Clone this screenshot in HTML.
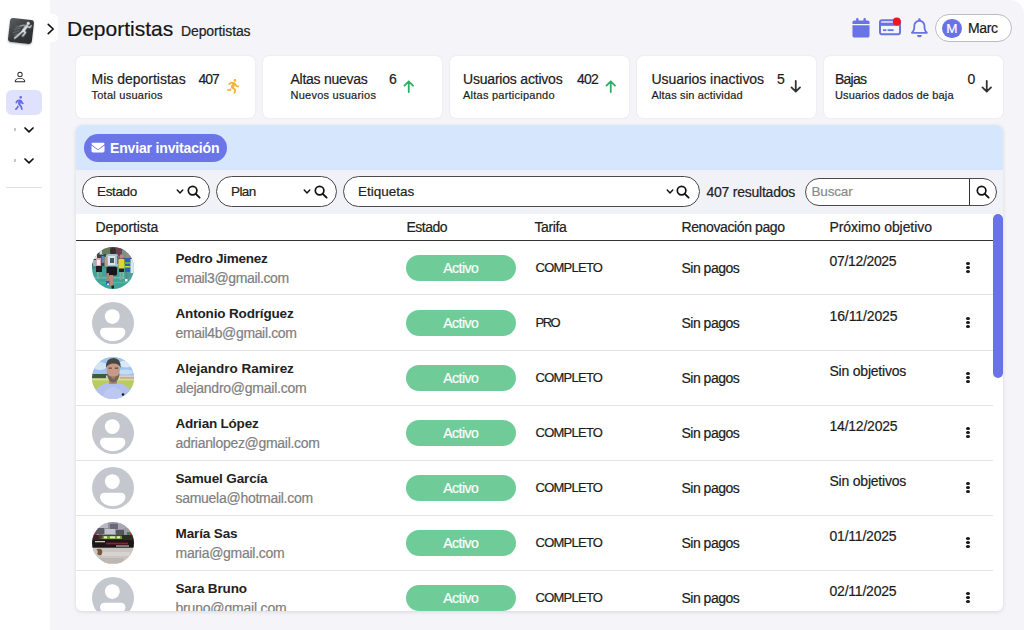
<!DOCTYPE html>
<html lang="es">
<head>
<meta charset="utf-8">
<title>Deportistas</title>
<style>
*{box-sizing:border-box;margin:0;padding:0}
html,body{width:1024px;height:630px;overflow:hidden;background:#fff}
body{font-family:"Liberation Sans",sans-serif;color:#1f1f1f;position:relative;-webkit-text-stroke:.2px currentColor}
svg{display:block;position:absolute;overflow:visible}
#app{position:absolute;left:0;top:0;width:1024px;height:630px;background:#f4f4f9;border-top-right-radius:14px;overflow:hidden}
#side{position:absolute;left:0;top:0;width:50px;height:630px;background:#fff}
#bump{position:absolute;left:40px;top:14px;width:18px;height:28px;background:#fff;border-radius:0 5px 5px 0}
#logo{position:absolute;left:9.1px;top:18.8px;width:23.5px;height:23.5px;border-radius:3px;background:linear-gradient(135deg,#5c6063,#34373a 55%,#2a2d2f);transform:rotate(6.5deg);box-shadow:0 1px 2px rgba(0,0,0,.3)}
.nav-active{position:absolute;left:6px;top:89.5px;width:35.5px;height:25.5px;border-radius:6px;background:#e0e1fd}
.divider{position:absolute;left:6px;top:187px;width:35.5px;height:1px;background:#e0e0e6}
h1{position:absolute;left:67px;top:16px;font-size:21px;font-weight:400;line-height:26px;color:#141414;white-space:nowrap}
.sub{position:absolute;left:181px;top:22px;font-size:14px;letter-spacing:-.12px;line-height:18px;color:#222;white-space:nowrap}
.pill{position:absolute;left:934.5px;top:14px;width:77.5px;height:28px;border:1px solid #bcbcc4;border-radius:14px;background:#fff}
.pill .av{position:absolute;left:6.5px;top:3.5px;width:19.5px;height:19.5px;border-radius:50%;background:#6873e6;color:#fff;font-size:13.5px;line-height:19.5px;text-align:center}
.pill .nm{position:absolute;left:32.5px;top:4px;font-size:14px;line-height:18px;color:#1a1a1a}
.card{position:absolute;top:56px;width:178.6px;height:61.5px;background:#fff;border-radius:6px;box-shadow:0 0 2px rgba(0,0,0,.10)}
.card .t,.card .n{position:absolute;top:15px;font-size:14px;line-height:16px;white-space:nowrap;color:#1c1c1c}
.card .s{position:absolute;top:33px;font-size:11px;letter-spacing:.25px;line-height:13px;white-space:nowrap;color:#1c1c1c}
#panel{position:absolute;left:75.5px;top:125px;width:927.5px;height:486px;background:#fff;border-radius:6px;overflow:hidden;box-shadow:0 1px 4px rgba(0,0,0,.12)}
#band{position:absolute;left:0;top:0;width:928px;height:45px;background:#d5e6fd}
#btn{-webkit-text-stroke:0;position:absolute;left:8.5px;top:9px;width:143px;height:28px;border-radius:14px;background:#6a75e8;color:#fff;font-weight:700;font-size:14px;line-height:28px;padding-left:26px;white-space:nowrap}
#filters{position:absolute;left:0;top:45px;width:928px;height:44px;background:#f1f1f8}
.sel{position:absolute;top:6px;height:31px;border:1px solid #4a4a4a;border-radius:15.5px;background:#fff;font-size:13.5px;line-height:29px;padding-left:14px;color:#222;white-space:nowrap}
.res{position:absolute;left:631px;top:14px;font-size:14px;line-height:16px;color:#222;white-space:nowrap}
#thead{position:absolute;left:0;top:89px;width:917px;height:27px;border-bottom:1px solid #333;font-size:14px;color:#222}
#thead>span{position:absolute;top:5px;line-height:16px;white-space:nowrap}
.row{position:absolute;left:0;width:917px;height:55px;border-bottom:1px solid #e4e4e8;font-size:14px;color:#1c1c1c}
.row .nm{-webkit-text-stroke:0;position:absolute;left:100px;top:9.5px;font-weight:700;font-size:13.5px;line-height:16px;white-space:nowrap;color:#222}
.row .em{position:absolute;left:100px;top:28.5px;font-size:14px;line-height:16px;white-space:nowrap;color:#808080}
.row .st{position:absolute;left:330.5px;top:14px;width:109.5px;height:26px;border-radius:13px;background:#6fcc99;color:#fff;text-align:center;line-height:26px;font-size:14px}
.row .tf{position:absolute;left:460px;top:19px;font-size:13px;line-height:16px;white-space:nowrap}
.row .rn{position:absolute;left:606px;top:19px;line-height:16px;white-space:nowrap}
.row .ob{position:absolute;left:754px;top:12px;line-height:16px;white-space:nowrap}
.row .dots{position:absolute;left:890.8px;top:21px;width:4px;height:12px}
.row .dots i{display:block;width:3.9px;height:3.3px;border-radius:50%;background:#1a1a1a;margin-bottom:.65px}
.ava{left:16px;top:6px;width:42px;height:42px}
#scroll{position:absolute;left:917.5px;top:89px;width:10px;height:164px;border-radius:5px;background:#6873e6}
</style>
</head>
<body>
<div id="app">
<div id="side">
<div id="logo"><svg viewBox="0 0 25 25" style="left:0;top:0;width:23.5px;height:23.5px;filter:blur(.3px)"><g fill="none" stroke="#dde1e4" stroke-linecap="round" stroke-linejoin="round"><circle cx="19.500" cy="3.700" r="1.700" fill="#e6e9eb" stroke="none"/><path d="M18.400 6.800 L15 12.300" stroke-width="3"/><path d="M18.800 6.600 L21.600 8.200 L23 5.800" stroke-width="1.400"/><path d="M18 6.600 L14.400 6.400 L11.400 7.600" stroke="#aeb3b6" stroke-width="1.300"/><path d="M15.200 12.300 L17.700 13.600 L15.200 17.800" stroke-width="1.700"/><path d="M14.600 12.600 L11 16.800 L7 21" stroke-width="1.800"/><path d="M5.500 12 L12 9.500 M5 15.500 L11.500 12.300 M7 9 L12 7.600 M6 18.300 L10 15.600" stroke="#7d8386" stroke-width=".9"/></g></svg></div>
<svg viewBox="0 0 16 16" style="left:12.5px;top:69.5px;width:14px;height:14px"><path fill="#222" d="M8 8a3 3 0 1 0 0-6 3 3 0 0 0 0 6m2-3a2 2 0 1 1-4 0 2 2 0 0 1 4 0m4 8c0 1-1 1-1 1H3s-1 0-1-1 1-4 6-4 6 3 6 4m-1-.004c-.001-.246-.154-.986-.832-1.664C11.516 10.68 10.289 10 8 10s-3.516.68-4.168 1.332c-.678.678-.83 1.418-.832 1.664z"/></svg>
<div class="nav-active"></div>
<svg viewBox="0 0 320 512" style="left:15px;top:95.5px;width:8.8px;height:14px"><path fill="#6769ef" d="M160 48a48 48 0 1 1 96 0 48 48 0 1 1 -96 0zM126.500 199.300c-1 .4-1.900 .8-2.900 1.200l-8 3.500c-16.400 7.300-29 21.200-34.700 38.200l-2.600 7.800c-5.600 16.800-23.700 25.800-40.500 20.200s-25.800-23.700-20.200-40.500l2.600-7.800c11.400-34.100 36.600-61.900 69.400-76.500l8-3.500c20.800-9.200 43.300-14 66.100-14c44.600 0 84.800 26.800 101.900 67.900L281 232.700l21.400 10.700c15.800 7.900 22.200 27.100 14.300 42.900s-27.100 22.200-42.900 14.300L247 287.300c-10.300-5.200-18.400-13.800-22.800-24.500l-9.600-23-19.300 65.500 49.500 54c5.400 5.900 9.200 13 11.200 20.800l23 92.100c4.300 17.100-6.100 34.500-23.300 38.800s-34.500-6.100-38.800-23.300l-22-88.100-70.700-77.100c-14.800-16.100-20.300-38.600-14.700-59.700l16.900-63.500zM68.700 398l25-62.400c2.100 3 4.500 5.800 7 8.600l40.700 44.400-14.500 36.200c-2.400 6-6 11.500-10.600 16.100L54.600 502.600c-12.500 12.500-32.800 12.500-45.300 0s-12.500-32.800 0-45.300L68.700 398z"/></svg>
<svg viewBox="0 0 10 6" style="left:23.8px;top:127px;width:10px;height:6px"><path d="M1 1 L5 4.8 L9 1" fill="none" stroke="#111" stroke-width="1.7" stroke-linecap="round" stroke-linejoin="round"/></svg>
<svg viewBox="0 0 10 6" style="left:23.8px;top:157.8px;width:10px;height:6px"><path d="M1 1 L5 4.8 L9 1" fill="none" stroke="#111" stroke-width="1.7" stroke-linecap="round" stroke-linejoin="round"/></svg>
<div style="position:absolute;left:14px;top:128px;width:2px;height:3px;background:#c4c4cc"></div>
<div style="position:absolute;left:14px;top:159px;width:2px;height:3px;background:#c4c4cc"></div>
<div class="divider"></div>
</div>
<div id="bump"></div>
<svg viewBox="0 0 8 12" style="left:46.5px;top:22.5px;width:7.5px;height:12px"><path d="M1.3 1 L6.6 6 L1.3 11" fill="none" stroke="#111" stroke-width="1.7" stroke-linecap="round" stroke-linejoin="round"/></svg>
<h1>Deportistas</h1>
<div class="sub">Deportistas</div>
<svg viewBox="0 0 448 512" style="left:851.5px;top:17.5px;width:18px;height:19.5px"><path fill="#6873e6" d="M96 32V64H48C21.500 64 0 85.500 0 112v48H448V112c0-26.500-21.500-48-48-48H352V32c0-17.700-14.300-32-32-32s-32 14.300-32 32V64H160V32c0-17.700-14.300-32-32-32S96 14.300 96 32zM448 192H0V464c0 26.500 21.500 48 48 48H400c26.500 0 48-21.500 48-48V192z"/></svg>
<svg viewBox="0 0 22 16" style="left:879px;top:19.1px;width:22px;height:16.5px"><rect x="1" y="1" width="20" height="14" rx="2" fill="none" stroke="#6873e6" stroke-width="2"/><rect x="1" y="3.4" width="20" height="3.2" fill="#6873e6"/><rect x="4" y="10" width="3.4" height="1.8" fill="#6873e6"/><rect x="8.6" y="10" width="6" height="1.8" fill="#6873e6"/><circle cx="17.800" cy="2.300" r="4" fill="#f5131f"/></svg>
<svg viewBox="0 0 448 512" style="left:911px;top:17.5px;width:16.8px;height:19.5px"><path fill="#6873e6" d="M224 0c-17.700 0-32 14.300-32 32V51.200C119 66 64 130.600 64 208v25.400c0 45.400-15.500 89.500-43.800 124.900L5.300 377c-5.800 7.200-6.900 17.100-2.900 25.400S14.800 416 24 416H424c9.200 0 17.600-5.300 21.600-13.600s2.900-18.200-2.900-25.400l-14.900-18.600C399.500 322.900 384 278.800 384 233.400V208c0-77.400-55-142-128-156.800V32c0-17.700-14.300-32-32-32zm0 96c61.900 0 112 50.100 112 112v25.400c0 47.900 13.900 94.600 39.700 134.600H72.300C98.100 328 112 281.300 112 233.400V208c0-61.900 50.100-112 112-112zm64 352H224 160c0 17 6.700 33.300 18.700 45.300s28.300 18.700 45.300 18.700s33.300-6.700 45.300-18.700s18.700-28.300 18.700-45.300z"/></svg>
<div class="pill"><div class="av">M</div><div class="nm" style="letter-spacing:-.4px">Marc</div></div>
<div class="card" style="left:76px"><div class="t" style="left:15.5px">Mis deportistas</div><div class="n" style="left:122.5px"><span style="letter-spacing:-1.00px">407</span></div><div class="s" style="left:15.5px">Total usuarios</div><svg viewBox="0 0 448 512" style="left:151px;top:23px;width:13px;height:14.8px"><path fill="#f2b53a" d="M320 48a48 48 0 1 0 -96 0 48 48 0 1 0 96 0zM125.700 175.500c9.900-9.900 23.400-15.500 37.500-15.500c1.900 0 3.800 .1 5.600 .3L137.600 254c-9.300 28 1.700 58.800 26.800 74.500l86.200 53.900-25.400 88.800c-4.900 17 5 34.700 22 39.600s34.700-5 39.600-22l28.700-100.400c5.900-20.600-2.600-42.600-20.700-53.900L238 299l30.900-82.400 5.100 12.300C289 264.700 323.900 288 362.700 288H384c17.700 0 32-14.300 32-32s-14.300-32-32-32H362.700c-12.900 0-24.600-7.800-29.500-19.700l-6.300-15c-14.600-35.100-44.100-61.900-80.500-73.100l-48.700-15c-11.100-3.400-22.700-5.200-34.400-5.200c-31 0-60.800 12.300-82.700 34.300L57.400 153.400c-12.500 12.500-12.500 32.800 0 45.300s32.800 12.500 45.300 0l23.100-23.100zM91.200 352H32c-17.700 0-32 14.300-32 32s14.300 32 32 32h69.600c19 0 36.200-11.200 43.900-28.500L157 361.600l-9.500-6c-17.500-10.900-30.500-26.800-37.900-44.900L91.200 352z"/></svg></div>
<div class="card" style="left:263px"><div class="t" style="left:27.5px"><span style="letter-spacing:-0.27px">Altas nuevas</span></div><div class="n" style="left:126px">6</div><div class="s" style="left:27.5px">Nuevos usuarios</div><svg viewBox="0 0 12 14" style="left:139.5px;top:23.5px;width:11.5px;height:13px"><path d="M6 13 V1.6 M1.4 6 L6 1.4 L10.600 6" fill="none" stroke="#2fae66" stroke-width="1.95" stroke-linecap="round" stroke-linejoin="round"/></svg></div>
<div class="card" style="left:450px"><div class="t" style="left:13px"><span style="letter-spacing:-0.20px">Usuarios activos</span></div><div class="n" style="left:127px"><span style="letter-spacing:-0.75px">402</span></div><div class="s" style="left:13px"><span style="letter-spacing:0.24px">Altas participando</span></div><svg viewBox="0 0 12 14" style="left:155px;top:23.5px;width:11.5px;height:13px"><path d="M6 13 V1.6 M1.4 6 L6 1.4 L10.600 6" fill="none" stroke="#2fae66" stroke-width="1.95" stroke-linecap="round" stroke-linejoin="round"/></svg></div>
<div class="card" style="left:637px"><div class="t" style="left:14.5px"><span style="letter-spacing:-0.06px">Usuarios inactivos</span></div><div class="n" style="left:140px">5</div><div class="s" style="left:14.5px"><span style="letter-spacing:0.17px">Altas sin actividad</span></div><svg viewBox="0 0 12 14" style="left:153px;top:24px;width:11.5px;height:13px"><path d="M6 1 V12.400 M1.400 8 L6 12.600 L10.600 8" fill="none" stroke="#333" stroke-width="1.95" stroke-linecap="round" stroke-linejoin="round"/></svg></div>
<div class="card" style="left:824px"><div class="t" style="left:11px"><span style="letter-spacing:-0.75px">Bajas</span></div><div class="n" style="left:143.5px">0</div><div class="s" style="left:11px"><span style="letter-spacing:0.14px">Usuarios dados de baja</span></div><svg viewBox="0 0 12 14" style="left:156.5px;top:24px;width:11.5px;height:13px"><path d="M6 1 V12.400 M1.400 8 L6 12.600 L10.600 8" fill="none" stroke="#333" stroke-width="1.95" stroke-linecap="round" stroke-linejoin="round"/></svg></div>
<div id="panel">
<div id="band"><div id="btn"><span style="letter-spacing:-0.16px">Enviar invitación</span><svg viewBox="0 0 512 512" style="left:7px;top:6.5px;width:14px;height:13px"><path fill="#fff" d="M48 64C21.500 64 0 85.500 0 112c0 15.100 7.100 29.300 19.200 38.400L236.800 313.600c11.400 8.500 27 8.500 38.400 0L492.800 150.400c12.100-9.100 19.200-23.300 19.200-38.400c0-26.500-21.500-48-48-48H48zM0 176V384c0 35.300 28.700 64 64 64H448c35.300 0 64-28.700 64-64V176L294.400 339.200c-22.800 17.100-54 17.100-76.800 0L0 176z"/></svg></div></div>
<div id="filters">
<div class="sel" style="left:6.5px;width:127.500px"><span style="letter-spacing:-0.35px">Estado</span><svg viewBox="0 0 8 6" style="left:93px;top:12px;width:8px;height:5.500px"><path d="M1 1.200 L4 4.300 L7 1.200" fill="none" stroke="#111" stroke-width="1.600" stroke-linecap="round" stroke-linejoin="round"/></svg><svg viewBox="0 0 14 14" style="left:104px;top:7.5px;width:14px;height:14px"><circle cx="5.600" cy="5.600" r="4.300" fill="none" stroke="#111" stroke-width="1.700"/><path d="M8.800 8.800 L12.600 12.600" stroke="#111" stroke-width="1.900" stroke-linecap="round"/></svg></div>
<div class="sel" style="left:140.500px;width:121px"><span style="letter-spacing:-0.58px">Plan</span><svg viewBox="0 0 8 6" style="left:86px;top:12px;width:8px;height:5.500px"><path d="M1 1.200 L4 4.300 L7 1.200" fill="none" stroke="#111" stroke-width="1.600" stroke-linecap="round" stroke-linejoin="round"/></svg><svg viewBox="0 0 14 14" style="left:97px;top:7.5px;width:14px;height:14px"><circle cx="5.600" cy="5.600" r="4.300" fill="none" stroke="#111" stroke-width="1.700"/><path d="M8.800 8.800 L12.600 12.600" stroke="#111" stroke-width="1.900" stroke-linecap="round"/></svg></div>
<div class="sel" style="left:267.500px;width:356.500px">Etiquetas<svg viewBox="0 0 8 6" style="left:321.5px;top:12px;width:8px;height:5.500px"><path d="M1 1.200 L4 4.300 L7 1.200" fill="none" stroke="#111" stroke-width="1.600" stroke-linecap="round" stroke-linejoin="round"/></svg><svg viewBox="0 0 14 14" style="left:332px;top:7.5px;width:14px;height:14px"><circle cx="5.600" cy="5.600" r="4.300" fill="none" stroke="#111" stroke-width="1.700"/><path d="M8.800 8.800 L12.600 12.600" stroke="#111" stroke-width="1.900" stroke-linecap="round"/></svg></div>
<div class="res"><span style="letter-spacing:-0.24px">407 resultados</span></div>
<div class="sel" style="left:729.500px;width:191.500px;top:7.5px;height:28px;line-height:26px;padding-left:5.5px;color:#8a8a8a"><span style="letter-spacing:-0.16px">Buscar</span><div style="position:absolute;left:162.500px;top:0;width:1px;height:26px;background:#333"></div><svg viewBox="0 0 14 14" style="left:169.5px;top:6px;width:14px;height:14px"><circle cx="5.600" cy="5.600" r="4.300" fill="none" stroke="#111" stroke-width="1.700"/><path d="M8.800 8.800 L12.600 12.600" stroke="#111" stroke-width="1.900" stroke-linecap="round"/></svg></div>
</div>
<div id="thead"><span style="left:20px"><span style="letter-spacing:-0.11px">Deportista</span></span><span style="left:331px"><span style="letter-spacing:-0.50px">Estado</span></span><span style="left:459px"><span style="letter-spacing:-0.40px">Tarifa</span></span><span style="left:606px"><span style="letter-spacing:-0.39px">Renovación pago</span></span><span style="left:754px"><span style="letter-spacing:-0.07px">Próximo objetivo</span></span></div>
<div class="row" style="top:116px;height:54px"><svg class="ava" viewBox="0 0 42 42"><defs><clipPath id="c1"><circle cx="21" cy="21" r="21"/></clipPath><filter id="b1" x="-10%" y="-10%" width="120%" height="120%"><feGaussianBlur stdDeviation=".55"/></filter></defs><g clip-path="url(#c1)"><rect width="42" height="42" fill="#3fa596"/><g filter="url(#b1)"><rect x="-2" y="-2" width="46" height="21" fill="#47544d"/><rect x="-2" y="17" width="46" height="5" fill="#4d8f86"/><rect x="3" y="30" width="30" height="1.500" fill="#5fbcae"/><rect x="8" y="35" width="26" height="1.200" fill="#58b5a7"/><rect x="0" y="5" width="13" height="14" fill="#3a4541"/><rect x="7.500" y="2.500" width="4" height="5" fill="#cfd8e0"/><rect x="2" y="8" width="3" height="4" fill="#dfe2ea"/><rect x="9.500" y="9" width="3" height="7" fill="#5b86b8"/><rect x="1" y="13" width="3" height="6" fill="#9fb3bf"/><rect x="4" y="11" width="5" height="8" fill="#d9a7b4"/><rect x="5" y="13" width="3" height="5" fill="#eef0f0"/><rect x="4" y="19" width="6" height="6" fill="#1c1f21"/><rect x="5" y="25" width="2" height="7" fill="#7fb0a6"/><rect x="8" y="25" width="2" height="6" fill="#6f9f96"/><rect x="22" y="0" width="8" height="10" fill="#6d3f52"/><rect x="10" y="1" width="8" height="6" fill="#6a7a5c"/><rect x="30" y="3" width="12" height="8" fill="#7f8f86"/><ellipse cx="21" cy="4" rx="3" ry="3.500" fill="#3a2f2c"/><rect x="14" y="7" width="12" height="13" rx="2" fill="#9cc6d6"/><rect x="16" y="9" width="7" height="9" fill="#d6e6ea"/><rect x="18" y="11" width="4" height="5" fill="#3d5a66"/><rect x="12.500" y="10" width="3" height="9" fill="#c09a86"/><rect x="25" y="9" width="2.500" height="8" fill="#8a6a5a"/><rect x="14.500" y="19.500" width="10.500" height="9" rx="1.500" fill="#14161b"/><rect x="17.500" y="28" width="3.500" height="11" fill="#b98d76"/><rect x="14.500" y="26" width="2.500" height="9" fill="#a88472"/><rect x="14" y="34" width="3.500" height="3.500" fill="#2d5fc0"/><rect x="15" y="36.500" width="2" height="1.500" fill="#e8ecf2"/><rect x="19.500" y="38.500" width="2.500" height="3" fill="#1b2030"/><ellipse cx="29.500" cy="9.500" rx="2" ry="2.300" fill="#b58b74"/><rect x="26.500" y="12" width="6" height="10" rx="1" fill="#e3d52f"/><rect x="27" y="21.500" width="5" height="3.500" fill="#1f2226"/><rect x="27.500" y="25" width="1.800" height="8" fill="#7fae9f"/><rect x="30.300" y="25" width="1.800" height="7" fill="#86b5a6"/><ellipse cx="35.500" cy="8.500" rx="2" ry="2.300" fill="#9a8a80"/><rect x="33" y="11" width="5.500" height="14" rx="1" fill="#2d62b8"/><rect x="33" y="15" width="5.500" height="2" fill="#58b05a"/><rect x="33" y="19" width="5.500" height="1.500" fill="#c8d23a"/><rect x="33.500" y="25" width="1.800" height="8" fill="#4f8f8a"/><rect x="36.200" y="25" width="1.800" height="7" fill="#5a9a92"/><rect x="33" y="32" width="2.500" height="2.500" fill="#e6f0ee"/><rect x="38.500" y="12" width="4" height="14" fill="#dfe6ea"/></g></g></svg><div class="nm"><span style="letter-spacing:-0.25px">Pedro Jimenez</span></div><div class="em"><span style="letter-spacing:-0.37px">email3@gmail.com</span></div><div class="st"><span style="letter-spacing:-0.50px">Activo</span></div><div class="tf"><span style="letter-spacing:-0.75px">COMPLETO</span></div><div class="rn"><span style="letter-spacing:-0.50px">Sin pagos</span></div><div class="ob"><span style="letter-spacing:-0.33px">07/12/2025</span></div><div class="dots"><i></i><i></i><i></i></div></div>
<div class="row" style="top:171px"><svg class="ava" viewBox="0 0 42 42"><circle cx="21" cy="21" r="21" fill="#c5c7cf"/><circle cx="20.300" cy="14.600" r="7.400" fill="#fff"/><path fill="#fff" d="M8 30.500Q8 25.700 12.800 25.700H28.600Q33.400 25.700 33.400 30.500Q33 34.500 28 37.600Q20.700 41 13.400 37.600Q8.400 34.500 8 30.500Z"/></svg><div class="nm"><span style="letter-spacing:-0.16px">Antonio Rodríguez</span></div><div class="em"><span style="letter-spacing:-0.35px">email4b@gmail.com</span></div><div class="st"><span style="letter-spacing:-0.50px">Activo</span></div><div class="tf"><span style="letter-spacing:-1.50px">PRO</span></div><div class="rn"><span style="letter-spacing:-0.50px">Sin pagos</span></div><div class="ob"><span style="letter-spacing:-0.11px">16/11/2025</span></div><div class="dots"><i></i><i></i><i></i></div></div>
<div class="row" style="top:226px"><svg class="ava" viewBox="0 0 42 42"><defs><clipPath id="c2"><circle cx="21" cy="21" r="21"/></clipPath><filter id="b2" x="-10%" y="-10%" width="120%" height="120%"><feGaussianBlur stdDeviation=".600"/></filter></defs><g clip-path="url(#c2)"><rect width="42" height="42" fill="#a3c8ee"/><g filter="url(#b2)"><rect x="-2" y="-2" width="46" height="23" fill="#9fc5ee"/><ellipse cx="8" cy="9" rx="7" ry="4" fill="#d5e4f5"/><ellipse cx="34" cy="7" rx="7" ry="3.500" fill="#dbe8f6"/><ellipse cx="33" cy="15" rx="8" ry="2.500" fill="#c7dcf3"/><rect x="-2" y="17" width="18" height="4.500" fill="#3f5a3c"/><rect x="14" y="18.500" width="30" height="3.500" fill="#d9cfd3"/><rect x="28" y="20.500" width="16" height="1.500" fill="#b77f86"/><rect x="-2" y="21.500" width="46" height="10" fill="#b9cc5c"/><rect x="-2" y="21.500" width="46" height="2" fill="#d5dc8c"/><path d="M2 44Q3 28 14 26.500L21 25L28 26.500Q39 28 40 44Z" fill="#b3c0ee"/><path d="M10 44Q11 31 21 30Q31 31 32 44Z" fill="#bcc8f2"/><rect x="17" y="21" width="8" height="6" fill="#b08a78"/><ellipse cx="21.200" cy="13" rx="6.600" ry="9" fill="#c79a85"/><path d="M14 11Q13.500 1 21.500 1Q29 1 28.600 11Q27 6.500 21.500 6.500Q16 6.500 14 11Z" fill="#47463f"/><path d="M14.800 16Q16 25.500 21.200 25.800Q26.500 25.500 27.800 16Q25.500 20 21.300 19.600Q17 20 14.800 16Z" fill="#75665c"/><ellipse cx="21.300" cy="21" rx="2" ry=".900" fill="#9a7f72"/><rect x="16.500" y="10.600" width="3.400" height="1.100" fill="#5a4338"/><rect x="22.800" y="10.600" width="3.400" height="1.100" fill="#5a4338"/><circle cx="31" cy="37.500" r="1.300" fill="#15181f"/></g></g></svg><div class="nm"><span style="letter-spacing:-0.01px">Alejandro Ramirez</span></div><div class="em"><span style="letter-spacing:-0.25px">alejandro@gmail.com</span></div><div class="st"><span style="letter-spacing:-0.50px">Activo</span></div><div class="tf"><span style="letter-spacing:-0.75px">COMPLETO</span></div><div class="rn"><span style="letter-spacing:-0.50px">Sin pagos</span></div><div class="ob"><span style="letter-spacing:-0.22px">Sin objetivos</span></div><div class="dots"><i></i><i></i><i></i></div></div>
<div class="row" style="top:281px"><svg class="ava" viewBox="0 0 42 42"><circle cx="21" cy="21" r="21" fill="#c5c7cf"/><circle cx="20.300" cy="14.600" r="7.400" fill="#fff"/><path fill="#fff" d="M8 30.500Q8 25.700 12.800 25.700H28.600Q33.400 25.700 33.400 30.500Q33 34.500 28 37.600Q20.700 41 13.400 37.600Q8.400 34.500 8 30.500Z"/></svg><div class="nm"><span style="letter-spacing:-0.21px">Adrian López</span></div><div class="em"><span style="letter-spacing:-0.30px">adrianlopez@gmail.com</span></div><div class="st"><span style="letter-spacing:-0.50px">Activo</span></div><div class="tf"><span style="letter-spacing:-0.75px">COMPLETO</span></div><div class="rn"><span style="letter-spacing:-0.50px">Sin pagos</span></div><div class="ob"><span style="letter-spacing:-0.22px">14/12/2025</span></div><div class="dots"><i></i><i></i><i></i></div></div>
<div class="row" style="top:336px"><svg class="ava" viewBox="0 0 42 42"><circle cx="21" cy="21" r="21" fill="#c5c7cf"/><circle cx="20.300" cy="14.600" r="7.400" fill="#fff"/><path fill="#fff" d="M8 30.500Q8 25.700 12.800 25.700H28.600Q33.400 25.700 33.400 30.500Q33 34.500 28 37.600Q20.700 41 13.400 37.600Q8.400 34.500 8 30.500Z"/></svg><div class="nm"><span style="letter-spacing:-0.14px">Samuel García</span></div><div class="em"><span style="letter-spacing:-0.28px">samuela@hotmail.com</span></div><div class="st"><span style="letter-spacing:-0.50px">Activo</span></div><div class="tf"><span style="letter-spacing:-0.75px">COMPLETO</span></div><div class="rn"><span style="letter-spacing:-0.50px">Sin pagos</span></div><div class="ob"><span style="letter-spacing:-0.22px">Sin objetivos</span></div><div class="dots"><i></i><i></i><i></i></div></div>
<div class="row" style="top:391px"><svg class="ava" viewBox="0 0 42 42"><defs><clipPath id="c3"><circle cx="21" cy="21" r="21"/></clipPath><filter id="b3" x="-10%" y="-10%" width="120%" height="120%"><feGaussianBlur stdDeviation=".550"/></filter></defs><g clip-path="url(#c3)"><rect width="42" height="42" fill="#c7c3be"/><g filter="url(#b3)"><rect x="-2" y="-2" width="46" height="17" fill="#95929f"/><rect x="6" y="0" width="10" height="6" fill="#b9b6c6"/><rect x="18" y="2" width="9" height="5" fill="#6b6876"/><rect x="26" y="0" width="10" height="7" fill="#a9a6b6"/><rect x="4" y="6" width="8" height="6" fill="#5c5a63"/><rect x="13" y="7" width="10" height="5" fill="#c5c3cf"/><rect x="24" y="8" width="8" height="5" fill="#55525c"/><rect x="32" y="6" width="8" height="5" fill="#9c9aa8"/><rect x="0" y="10" width="4.500" height="5" fill="#b3203f"/><rect x="35" y="10" width="3" height="5" fill="#2f8a4a"/><rect x="38" y="10.500" width="3" height="5" fill="#b8303a"/><rect x="-2" y="13" width="46" height="6" fill="#2e2a28"/><rect x="9" y="13.700" width="21" height="3.300" fill="#6e9c38"/><rect x="12" y="14.300" width="3" height="2" fill="#e6ecd8"/><rect x="18" y="14.300" width="5" height="2" fill="#dfe8c8"/><rect x="25" y="14.300" width="3" height="2" fill="#e6ecd8"/><rect x="7" y="12.500" width="3.500" height="4" fill="#5a3a2a"/><rect x="-2" y="18" width="46" height="8" fill="#1d1315"/><rect x="3" y="19" width="10" height="1.300" fill="#cfc6b8"/><rect x="14" y="20.600" width="22" height="1.800" fill="#8f2438"/><rect x="24" y="23.500" width="13" height="1" fill="#d9d6d8"/><rect x="-2" y="25.700" width="46" height="18" fill="#c9c5c0"/><rect x="10" y="30" width="28" height="4" fill="#d6d3d0"/><path d="M4.500 27.500Q7.500 26 10 28Q11 30.500 9 33Q6.500 34 5 31.500Q7 30 4.500 27.500Z" fill="#7a5638"/><rect x="6" y="36" width="26" height="5" fill="#bdb8b4"/></g></g></svg><div class="nm"><span style="letter-spacing:-0.12px">María Sas</span></div><div class="em"><span style="letter-spacing:-0.27px">maria@gmail.com</span></div><div class="st"><span style="letter-spacing:-0.50px">Activo</span></div><div class="tf"><span style="letter-spacing:-0.75px">COMPLETO</span></div><div class="rn"><span style="letter-spacing:-0.50px">Sin pagos</span></div><div class="ob"><span style="letter-spacing:-0.22px">01/11/2025</span></div><div class="dots"><i></i><i></i><i></i></div></div>
<div class="row" style="top:446px"><svg class="ava" viewBox="0 0 42 42"><circle cx="21" cy="21" r="21" fill="#c5c7cf"/><circle cx="20.300" cy="14.600" r="7.400" fill="#fff"/><path fill="#fff" d="M8 30.500Q8 25.700 12.800 25.700H28.600Q33.400 25.700 33.400 30.500Q33 34.500 28 37.600Q20.700 41 13.400 37.600Q8.400 34.500 8 30.500Z"/></svg><div class="nm"><span style="letter-spacing:-0.13px">Sara Bruno</span></div><div class="em"><span style="letter-spacing:-0.19px">bruno@gmail.com</span></div><div class="st"><span style="letter-spacing:-0.50px">Activo</span></div><div class="tf"><span style="letter-spacing:-0.75px">COMPLETO</span></div><div class="rn"><span style="letter-spacing:-0.50px">Sin pagos</span></div><div class="ob"><span style="letter-spacing:-0.22px">02/11/2025</span></div><div class="dots"><i></i><i></i><i></i></div></div>
<div id="scroll"></div>
</div>
</div>
</body>
</html>
